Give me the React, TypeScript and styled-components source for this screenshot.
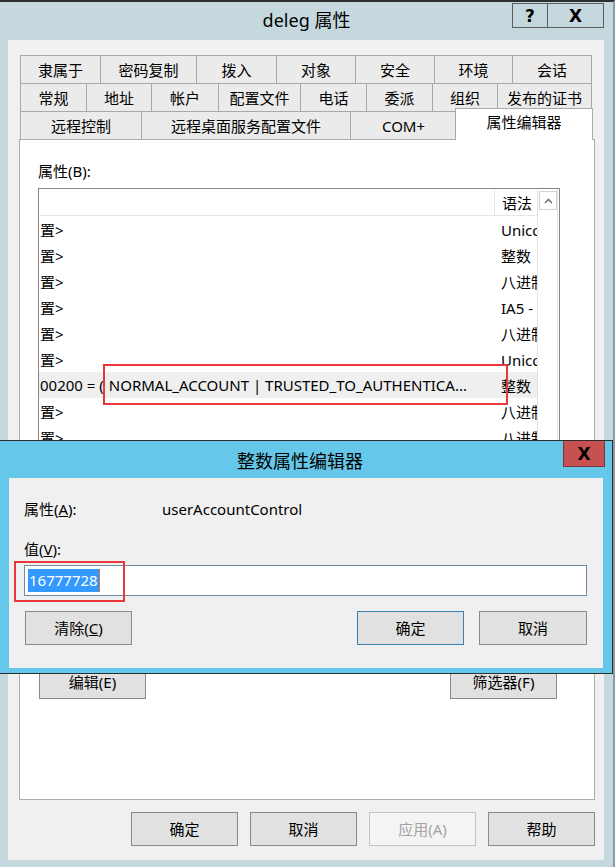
import React from "react";
import styled, { createGlobalStyle } from "styled-components";

const GlobalStyle = createGlobalStyle`
  html, body {
    margin: 0;
    padding: 0;
  }
  body {
    font-family: "Noto Sans", "Noto Sans CJK SC", sans-serif;
    font-size: 15px;
    color: #000;
  }
`;

const frameColor = "#c5d8de" as const;
const faceColor = "#f0f0f0" as const;
const markColor = "#e8383b" as const;

const Page = styled.div`
  position: relative;
  width: 615px;
  height: 867px;
  overflow: hidden;
  background: ${frameColor};
`;

const Window = styled.div`
  height: 867px;
  box-sizing: border-box;
  border-top: 2px solid #2e2e2e;
  border-right: 2px solid #8d9ca2;
  display: flex;
  flex-direction: column;
`;

const TitleBar = styled.div`
  position: relative;
  flex: none;
  height: 38px;
  display: flex;
  align-items: center;
  justify-content: center;
  font-size: 18px;
  line-height: 22px;
  padding-bottom: 2px;
  box-sizing: border-box;
`;

const CaptionButtons = styled.div`
  position: absolute;
  top: 1px;
  right: 9px;
  display: flex;
`;

const CaptionButton = styled.div<{ $w: number }>`
  width: ${({ $w }) => $w}px;
  height: 25px;
  box-sizing: border-box;
  border: 1px solid #5c5c5c;
  display: flex;
  align-items: center;
  justify-content: center;
  font-family: "DejaVu Sans", sans-serif;
  font-weight: bold;
  font-size: 17px;
  & + & {
    margin-left: -1px;
  }
`;

const Content = styled.div`
  flex: 1;
  margin: 0 9px 7px 8px;
  background: ${faceColor};
  padding: 15px 9px 14px 11px;
  display: flex;
  flex-direction: column;
  min-height: 0;
`;

const TabStrip = styled.div`
  margin-left: 1px;
  position: relative;
  z-index: 2;
`;

const TabRow = styled.div`
  display: flex;
  height: 28px;
  align-items: flex-end;
`;

const Tab = styled.div<{ $w: number; $active?: boolean }>`
  box-sizing: border-box;
  flex: none;
  width: ${({ $w }) => $w}px;
  height: 28px;
  border-top: 1px solid #a9a9a9;
  border-left: 1px solid #a9a9a9;
  background: #ebebeb;
  display: flex;
  align-items: center;
  justify-content: center;
  font-size: 15px;
  line-height: 20px;
  padding-top: 1px;
  white-space: nowrap;
  &:last-child {
    border-right: 1px solid #a9a9a9;
  }
  ${({ $active, $w }) =>
    $active
      ? `
    position: relative;
    top: 1px;
    height: 32px;
    width: ${$w + 3}px;
    margin-left: -1px;
    background: #fff;
    border: 1px solid #a9a9a9;
    border-bottom: none;
    padding-top: 0;
    padding-bottom: 6px;
  `
      : ""}
`;

const TabPanel = styled.div`
  flex: 1;
  background: #fff;
  border: 1px solid #acacac;
  padding: 21px 0 0 18px;
  display: flex;
  flex-direction: column;
  position: relative;
  z-index: 1;
`;

const FieldLabel = styled.div`
  line-height: 20px;
  margin-bottom: 7px;
`;

const ListBox = styled.div`
  width: 522px;
  height: 468px;
  box-sizing: border-box;
  border: 1px solid #828790;
  display: flex;
  overflow: hidden;
`;

const ListBody = styled.div`
  flex: 1;
  display: flex;
  flex-direction: column;
  min-width: 0;
`;

const HeaderRow = styled.div`
  display: flex;
  height: 27px;
  flex: none;
  box-sizing: border-box;
  border-bottom: 1px solid #e6e6e6;
`;

const HeaderCell = styled.div<{ $w?: number }>`
  ${({ $w }) => ($w ? `width: ${$w}px; flex: none;` : "flex: 1;")}
  display: flex;
  align-items: center;
  padding-left: 7px;
  box-sizing: border-box;
  & + & {
    border-left: 1px solid #e6e6e6;
  }
  white-space: nowrap;
  overflow: hidden;
`;

const Row = styled.div<{ $hot?: boolean }>`
  position: relative;
  display: flex;
  height: 26px;
  flex: none;
  align-items: center;
  background: ${({ $hot }) => ($hot ? "#efefef" : "#fff")};
`;

const NameCell = styled.div`
  flex: 1;
  padding-left: 1px;
  white-space: nowrap;
  overflow: hidden;
  display: flex;
  gap: 5px;
`;

const SyntaxCell = styled.div`
  width: 43px;
  flex: none;
  box-sizing: border-box;
  padding-left: 7px;
  white-space: nowrap;
  overflow: hidden;
`;

const Marker = styled.div<{ $left: number; $top: number; $w: number; $h: number }>`
  position: absolute;
  left: ${({ $left }) => $left}px;
  top: ${({ $top }) => $top}px;
  width: ${({ $w }) => $w}px;
  height: ${({ $h }) => $h}px;
  box-sizing: border-box;
  border: 2.5px solid ${markColor};
  pointer-events: none;
  z-index: 3;
`;

const ScrollBar = styled.div`
  width: 21px;
  flex: none;
  box-sizing: border-box;
  border-left: 1px solid #e3e3e3;
  border-right: 1px solid #e3e3e3;
  margin-right: 1px;
  padding: 2px 0 0 1px;
`;

const ScrollArrow = styled.div`
  width: 18px;
  height: 19px;
  box-sizing: border-box;
  border: 1px solid #d2d2d2;
  display: flex;
  align-items: center;
  justify-content: center;
`;

const ButtonRow = styled.div<{ $between?: boolean; $gap?: number }>`
  display: flex;
  gap: ${({ $gap }) => $gap ?? 12}px;
  justify-content: ${({ $between }) => ($between ? "space-between" : "flex-end")};
`;

const PanelButtons = styled(ButtonRow)`
  width: 518px;
  margin: 9px 0 0 1px;
`;

const Button = styled.div<{ $w?: number; $default?: boolean; $disabled?: boolean }>`
  width: ${({ $w }) => $w ?? 107}px;
  height: 34px;
  box-sizing: border-box;
  border: 1px solid ${({ $default, $disabled }) =>
    $default ? "#3c7fb1" : $disabled ? "#c4c4c4" : "#8a8a8a"};
  background: ${({ $disabled }) => ($disabled ? "#f4f4f4" : "#e1e1e1")};
  color: ${({ $disabled }) => ($disabled ? "#a3a3a3" : "#000")};
  display: flex;
  align-items: center;
  justify-content: center;
  line-height: 20px;
`;

const MainButtons = styled(ButtonRow)`
  margin-top: 12px;
`;

/* 上に重なる整数属性エディタ */
const Dialog = styled.div`
  position: absolute;
  left: -1px;
  top: 440px;
  width: 614px;
  height: 234px;
  box-sizing: border-box;
  border: 1px solid #2d2d2d;
  background: #65c8ea;
  display: flex;
  flex-direction: column;
  z-index: 10;
`;

const DialogTitle = styled.div`
  position: relative;
  height: 37px;
  flex: none;
  display: flex;
  align-items: center;
  justify-content: center;
  font-size: 18px;
  padding-right: 12px;
  box-sizing: border-box;
`;

const CloseButton = styled.div`
  position: absolute;
  top: 0;
  right: 7px;
  width: 42px;
  height: 26px;
  box-sizing: border-box;
  background: #c75050;
  border: 1px solid #7e3434;
  border-top: none;
  display: flex;
  align-items: center;
  justify-content: center;
  font-family: "DejaVu Sans", sans-serif;
  font-weight: bold;
  font-size: 17px;
`;

const DialogBody = styled.div`
  flex: 1;
  margin: 0 9px 5px 9px;
  background: ${faceColor};
  padding: 21px 15px 0 15px;
`;

const InfoRow = styled.div`
  display: flex;
  line-height: 20px;
`;

const InfoLabel = styled.div`
  width: 138px;
  flex: none;
`;

const ValueLabel = styled.div`
  line-height: 20px;
  margin-top: 20px;
`;

const InputWrap = styled.div`
  position: relative;
  margin-top: 6px;
`;

const Input = styled.div`
  width: 563px;
  height: 31px;
  box-sizing: border-box;
  border: 1px solid #6f8aa3;
  background: #fff;
  display: flex;
  align-items: center;
  padding-left: 3px;
`;

const Selected = styled.span`
  background: #3399ff;
  color: #fff;
  line-height: 23px;
  padding: 0 1px;
  border-right: 1px solid #e07020;
`;

const DialogButtons = styled(ButtonRow)`
  width: 562px;
  margin: 15px 0 0 1px;
  gap: 0;
  justify-content: flex-start;
`;

const Spacer = styled.div<{ $w: number }>`
  width: ${({ $w }) => $w}px;
  flex: none;
`;

const Underline = styled.span`
  text-decoration: underline;
`;

interface ListItem {
  name: string;
  value?: string;
  syntax: string;
}

const tabRows: { label: string; w: number; active?: boolean }[][] = [
  [
    { label: "隶属于", w: 80 },
    { label: "密码复制", w: 96 },
    { label: "拨入", w: 80 },
    { label: "对象", w: 79 },
    { label: "安全", w: 79 },
    { label: "环境", w: 78 },
    { label: "会话", w: 80 },
  ],
  [
    { label: "常规", w: 66 },
    { label: "地址", w: 65 },
    { label: "帐户", w: 67 },
    { label: "配置文件", w: 82 },
    { label: "电话", w: 66 },
    { label: "委派", w: 66 },
    { label: "组织", w: 65 },
    { label: "发布的证书", w: 95 },
  ],
  [
    { label: "远程控制", w: 121 },
    { label: "远程桌面服务配置文件", w: 209 },
    { label: "COM+", w: 106 },
    { label: "属性编辑器", w: 135, active: true },
  ],
];

const items: ListItem[] = [
  { name: "置>", syntax: "Unicode 字符串" },
  { name: "置>", syntax: "整数" },
  { name: "置>", syntax: "八进制字符串" },
  { name: "置>", syntax: "IA5 - 字符串" },
  { name: "置>", syntax: "八进制字符串" },
  { name: "置>", syntax: "Unicode 字符串" },
  {
    name: "00200 = (",
    value: "NORMAL_ACCOUNT | TRUSTED_TO_AUTHENTICA...",
    syntax: "整数",
  },
  { name: "置>", syntax: "八进制字符串" },
  { name: "置>", syntax: "八进制字符串" },
  { name: "置>", syntax: "八进制字符串" },
  { name: "置>", syntax: "Unicode 字符串" },
  { name: "置>", syntax: "整数" },
  { name: "置>", syntax: "整数" },
  { name: "置>", syntax: "八进制字符串" },
  { name: "置>", syntax: "Unicode 字符串" },
  { name: "置>", syntax: "整数" },
];

const ChevronUp = () => (
  <svg width="9" height="6" viewBox="0 0 9 6">
    <path d="M1 5 L4.5 1.5 L8 5" fill="none" stroke="#606060" strokeWidth="1.3" />
  </svg>
);

export default function App() {
  return (
    <>
      <GlobalStyle />
      <Page>
        <Window>
          <TitleBar>
            deleg 属性
            <CaptionButtons>
              <CaptionButton $w={36}>?</CaptionButton>
              <CaptionButton $w={57}>X</CaptionButton>
            </CaptionButtons>
          </TitleBar>
          <Content>
            <TabStrip>
              {tabRows.map((row, i) => (
                <TabRow key={i}>
                  {row.map((tab) => (
                    <Tab key={tab.label} $w={tab.w} $active={tab.active}>
                      {tab.label}
                    </Tab>
                  ))}
                </TabRow>
              ))}
            </TabStrip>
            <TabPanel>
              <FieldLabel>属性(B):</FieldLabel>
              <ListBox>
                <ListBody>
                  <HeaderRow>
                    <HeaderCell />
                    <HeaderCell $w={43}>语法</HeaderCell>
                  </HeaderRow>
                  {items.map((item, i) => (
                    <Row key={i} $hot={!!item.value}>
                      <NameCell>
                        <span>{item.name}</span>
                        {item.value && <span>{item.value}</span>}
                      </NameCell>
                      <SyntaxCell>{item.syntax}</SyntaxCell>
                      {item.value && <Marker $left={64} $top={-8} $w={405} $h={41} />}
                    </Row>
                  ))}
                </ListBody>
                <ScrollBar>
                  <ScrollArrow>
                    <ChevronUp />
                  </ScrollArrow>
                </ScrollBar>
              </ListBox>
              <PanelButtons $between>
                <Button>编辑(E)</Button>
                <Button>筛选器(F)</Button>
              </PanelButtons>
            </TabPanel>
            <MainButtons>
              <Button>确定</Button>
              <Button>取消</Button>
              <Button $disabled>应用(A)</Button>
              <Button>帮助</Button>
            </MainButtons>
          </Content>
        </Window>

        <Dialog>
          <DialogTitle>
            整数属性编辑器
            <CloseButton>X</CloseButton>
          </DialogTitle>
          <DialogBody>
            <InfoRow>
              <InfoLabel>
                属性(<Underline>A</Underline>):
              </InfoLabel>
              <div>userAccountControl</div>
            </InfoRow>
            <ValueLabel>
              值(<Underline>V</Underline>):
            </ValueLabel>
            <InputWrap>
              <Input>
                <Selected>16777728</Selected>
              </Input>
              <Marker $left={-10} $top={-4} $w={111} $h={41} />
            </InputWrap>
            <DialogButtons>
              <Button>
                清除(<Underline>C</Underline>)
              </Button>
              <Spacer $w={225} />
              <Button $default>确定</Button>
              <Spacer $w={15} />
              <Button $w={108}>取消</Button>
            </DialogButtons>
          </DialogBody>
        </Dialog>
      </Page>
    </>
  );
}
